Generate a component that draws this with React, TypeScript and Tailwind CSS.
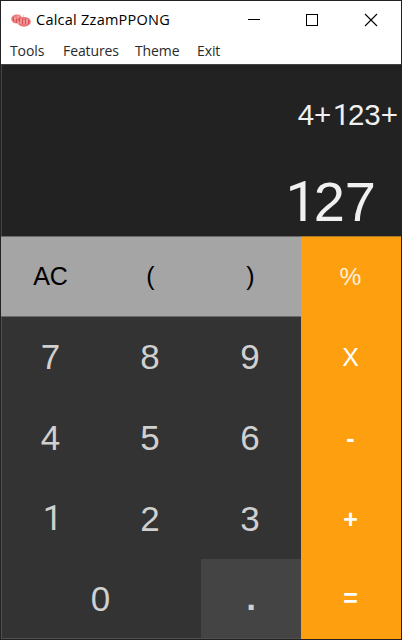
import { useState } from 'react'

const MENU = [
  { label: 'Tools', cls: 'w-[53px]' },
  { label: 'Features', cls: 'w-[72px]' },
  { label: 'Theme', cls: 'w-[62px]' },
  { label: 'Exit', cls: '' },
]

const DIGITS = ['7', '8', '9', '4', '5', '6', '1', '2', '3']

const OPERATORS = [
  { label: '%', cls: 'h-[81px] text-[24.5px] text-[#fff0dc]' },
  { label: 'X', cls: 'h-[81px] text-[25px]' },
  { label: '-', cls: 'h-[81px] text-[25px] font-bold' },
  { label: '+', cls: 'h-[80px] text-[25px] font-bold' },
  { label: '=', cls: 'h-[80px] text-[25px] font-bold' },
]

// Roboto draws its 1 without a foot
function Digits({ text }: { text: string }) {
  return (
    <span>
      {text.split('').map((c, i) => (
        <span key={i} className={c === '1' ? "ml-[0.06em] font-['Roboto',sans-serif] tracking-[-0.06em]" : ''}>{c}</span>
      ))}
    </span>
  )
}

function Logo() {
  return (
    <svg width="20" height="15" viewBox="0 0 20 15" className="shrink-0">
      <ellipse cx="5.8" cy="6" rx="5.6" ry="4.6" fill="#ea8080" />
      <ellipse cx="13" cy="8.8" rx="6.8" ry="4.9" fill="#ea7678" />
      <path d="M2.5 4v4M5.5 6v4M8.5 5v4M11.5 6v5M14.5 6v5M17.5 7v4" stroke="#d94f55" strokeWidth="1.2" />
      <path d="M4 4v3M7 3v2M7 8v3M10 6v5M13 7v4M16 6v5" stroke="#f6c4c0" strokeWidth="0.9" />
      <path d="M5 1l1 1M9 1v2M13 2l-1 2" stroke="#f4b8b0" strokeWidth="1" />
    </svg>
  )
}

function TitleBar() {
  return (
    <div className="flex h-[38px] items-center bg-white pl-[10px] text-black">
      <Logo />
      <span className="ml-[5px] w-[140px] whitespace-nowrap font-['Open_Sans',sans-serif] text-[14.5px] leading-5 tracking-[0.25px]">Calcal ZzamPPONG</span>
      <svg width="130" height="14" viewBox="0 0 130 14" className="ml-[72px] shrink-0" fill="none" stroke="#000" strokeWidth="1" shapeRendering="crispEdges">
        <path d="M0 6.5h12" />
        <path d="M58.5 1.5h11v11h-11z" />
        <path d="M117 1l12 12M129 1l-12 12" shapeRendering="auto" strokeWidth="1.1" />
      </svg>
    </div>
  )
}

export default function App() {
  const [expression] = useState('4+123+')
  const [result] = useState('127')

  return (
    <div className="flex h-[640px] w-[402px] flex-col border border-[#242124] bg-[#333333] font-['Liberation_Sans',Arial,sans-serif]">
      <TitleBar />
      <nav className="flex h-[25px] items-start bg-white pl-[9px] font-['Open_Sans',sans-serif] text-[14px] leading-[23px] tracking-[-0.1px] text-[#2a2a2a]">
        {MENU.map(m => (
          <span key={m.label} className={m.cls}>{m.label}</span>
        ))}
      </nav>

      {/* Display */}
      <div className="flex h-[172px] flex-col items-end border-l border-t border-[#444] bg-[#222222] text-[#f0f0f0]">
        <div className="mr-[3px] mt-[33px] text-[29.5px] leading-[34px]"><Digits text={expression} /></div>
        <div className="mr-[25px] mt-[38px] text-[56px] leading-[64px]"><Digits text={result} /></div>
      </div>

      {/* Keypad */}
      <div className="flex h-[403px]">
        <div className="w-[300px]">
          <div className="grid h-[81px] grid-cols-3 border-y border-[#6b6b6b] bg-[#a5a5a5] text-[25px] text-black">
            {['AC', '(', ')'].map(k => (
              <button key={k} className="flex items-center justify-center pr-px">{k}</button>
            ))}
          </div>
          <div className="grid h-[322px] grid-cols-[99px_100px_100px] grid-rows-[81px_81px_80px_79px] border-b border-l border-[#505050] text-[35px] text-[#d0d0d0]">
            {DIGITS.map(k => (
              <button key={k} className="flex items-center justify-center pr-[2px]"><Digits text={k} /></button>
            ))}
            <button className="col-span-2 flex items-center justify-center pr-[2px] pt-[2px]">0</button>
            <button className="flex items-center justify-center bg-[#444444] font-bold">.</button>
          </div>
        </div>
        <div className="flex w-[100px] flex-col border-t border-[#a8782c] bg-[#fe9f10] text-white">
          {OPERATORS.map(op => (
            <button key={op.label} className={`flex items-center justify-center pr-px ${op.cls}`}>{op.label}</button>
          ))}
        </div>
      </div>
    </div>
  )
}
